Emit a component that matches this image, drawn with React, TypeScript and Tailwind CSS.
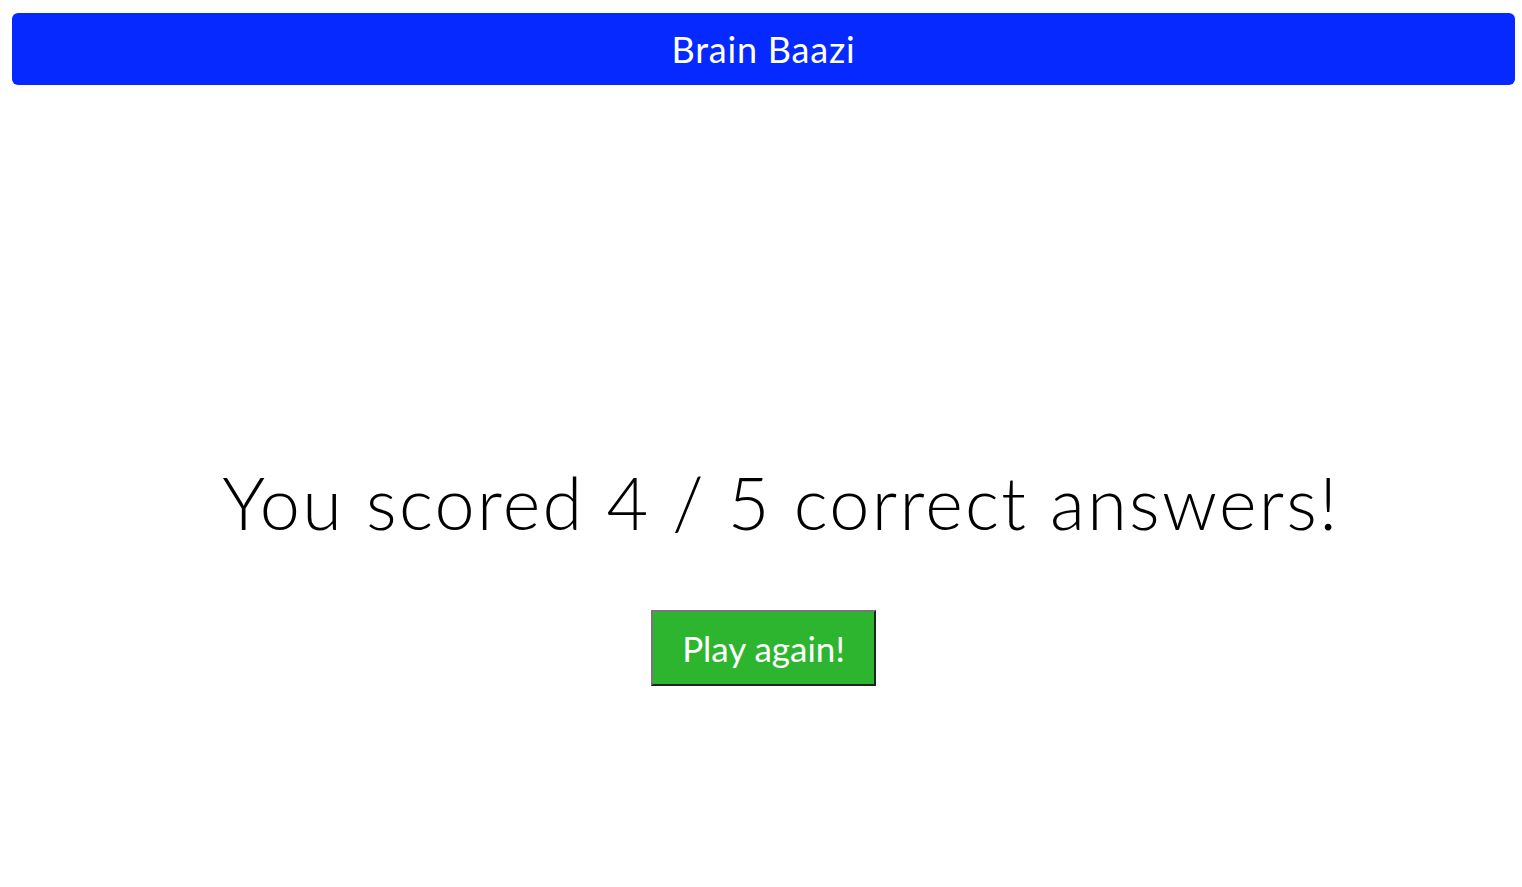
const App = (): JSX.Element => {
  const score = 4;
  const total = 5;

  return (
    <div className="min-h-screen bg-white font-['Lato','Open_Sans',sans-serif]">
      <header className="ml-3 mr-[7px] mt-[13px] flex h-[72px] items-center justify-center rounded-md bg-[#0529fe]">
        <h1 className="text-[36px] font-normal tracking-[0.8px] text-white">Brain Baazi</h1>
      </header>

      <main className="ml-3 mr-[7px] flex flex-col items-center pt-[377px]">
        <p className="pl-[35px] text-[72px] font-light leading-[80px] tracking-[2.3px] text-black">
          You scored {score} / {total} correct answers!
        </p>
        <button
          type="button"
          className="mt-[68px] h-[76px] w-[225px] border-2 border-t-[#777] border-l-[#777] border-b-[#222] border-r-[#222] bg-[#2eb52f] text-[35px] font-normal text-white"
        >
          Play again!
        </button>
      </main>
    </div>
  );
};

export default App;
